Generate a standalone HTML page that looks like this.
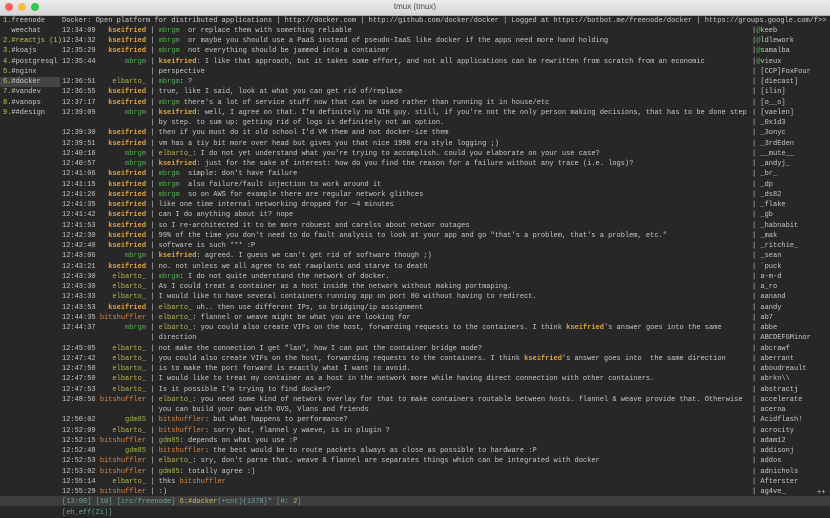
<!DOCTYPE html>
<html><head><meta charset="utf-8">
<style>
*{margin:0;padding:0}
body{width:830px;height:515px;overflow:hidden;background:#272727;position:relative;font-family:"Liberation Mono",monospace;}
.title{position:absolute;left:0;top:0;width:830px;height:15px;background:linear-gradient(#ececec,#d4d4d4);border-bottom:1px solid #b0b0b0;}
.title .t{position:absolute;left:0;width:830px;top:2px;text-align:center;font:8px "Liberation Sans",sans-serif;color:#4a4a4a}
.dot{position:absolute;top:3px;width:8px;height:8px;border-radius:50%}
pre{position:absolute;font-family:"Liberation Mono",monospace;font-size:7px;line-height:10.25px;color:#c8c8c8;white-space:pre;margin:0}
.k{color:#e3a443;font-weight:bold}
.m{color:#4fae4f}
.e{color:#b7b54c}
.b{color:#d98646}
.g{color:#a2b444}
.y{color:#c9c05a}
.c{color:#6aa6a0}
.s{position:absolute;left:0;top:496px;width:830px;height:10px;background:#3d3d3d}
.sel{position:absolute;left:0;top:77px;width:60px;height:10px;background:#444}
</style></head><body>
<div class="title"><div class="dot" style="left:5px;background:#fc605c"></div><div class="dot" style="left:18px;background:#fdbc40"></div><div class="dot" style="left:31px;background:#34c84a"></div><div class="t">tmux (tmux)</div></div>
<div class="sel"></div>
<div class="s"></div>
<pre style="left:3px;top:15.5px"><span class="y">1.</span>freenode
  weechat
<span class="y">2.#reactjs (1)</span>
<span class="y">3.</span>#koajs
<span class="y">4.</span>#postgresql
<span class="y">5.</span>#nginx
<span class="y">6.</span>#docker
<span class="y">7.</span>#vandev
<span class="y">8.</span>#vanops
<span class="y">9.</span>##design</pre>
<pre style="left:62px;top:15.5px">Docker: Open platform for distributed applications | http://docker.com | http://github.com/docker/docker | Logged at https://botbot.me/freenode/docker | https://groups.google.com/f&gt;&gt;
12:34:09   <span class="k">kseifried</span> | <span class="m">mbrgm</span>  or replace them with something reliable
12:34:32   <span class="k">kseifried</span> | <span class="m">mbrgm</span>  or maybe you should use a PaaS instead of pseudo-IaaS like docker if the apps need more hand holding
12:35:29   <span class="k">kseifried</span> | <span class="m">mbrgm</span>  not everything should be jammed into a container
12:35:44       <span class="m">mbrgm</span> | <span class="k">kseifried</span>: I like that approach, but it takes some effort, and not all applications can be rewritten from scratch from an economic
                     | perspective
12:36:51    <span class="e">elbarto_</span> | <span class="m">mbrgm</span>: ?
12:36:55   <span class="k">kseifried</span> | true, like I said, look at what you can get rid of/replace
12:37:17   <span class="k">kseifried</span> | <span class="m">mbrgm</span> there's a lot of service stuff now that can be used rather than running it in house/etc
12:39:09       <span class="m">mbrgm</span> | <span class="k">kseifried</span>: well, I agree on that. I'm definitely no NIH guy. still, if you're not the only person making decisions, that has to be done step
                     | by step. to sum up: getting rid of logs is definitely not an option.
12:39:30   <span class="k">kseifried</span> | then if you must do it old school I'd VM them and not docker-ize them
12:39:51   <span class="k">kseifried</span> | vm has a tiy bit more over head but gives you that nice 1998 era style logging ;)
12:40:16       <span class="m">mbrgm</span> | <span class="e">elbarto_</span>: I do not yet understand what you're trying to accomplish. could you elaborate on your use case?
12:40:57       <span class="m">mbrgm</span> | <span class="k">kseifried</span>: just for the sake of interest: how do you find the reason for a failure without any trace (i.e. logs)?
12:41:06   <span class="k">kseifried</span> | <span class="m">mbrgm</span>  simple: don't have failure
12:41:15   <span class="k">kseifried</span> | <span class="m">mbrgm</span>  also failure/fault injection to work around it
12:41:26   <span class="k">kseifried</span> | <span class="m">mbrgm</span>  so on AWS for example there are regular network glithces
12:41:35   <span class="k">kseifried</span> | like one time internal networking dropped for ~4 minutes
12:41:42   <span class="k">kseifried</span> | can I do anything about it? nope
12:41:53   <span class="k">kseifried</span> | so I re-architected it to be more robuest and carelss about networ outages
12:42:30   <span class="k">kseifried</span> | 99% of the time you don't need to do fault analysis to look at your app and go "that's a problem, that's a problem, etc."
12:42:40   <span class="k">kseifried</span> | software is such *** :P
12:43:06       <span class="m">mbrgm</span> | <span class="k">kseifried</span>: agreed. I guess we can't get rid of software though ;)
12:43:21   <span class="k">kseifried</span> | no. not unless we all agree to eat rawplants and starve to death
12:43:30    <span class="e">elbarto_</span> | <span class="m">mbrgm</span>: I do not quite understand the network of docker.
12:43:30    <span class="e">elbarto_</span> | As I could treat a container as a host inside the network without making portmaping.
12:43:33    <span class="e">elbarto_</span> | I would like to have several containers running app on port 80 without having to redirect.
12:43:53   <span class="k">kseifried</span> | <span class="e">elbarto_</span> uh.. then use different IPs, so bridging/ip assignment
12:44:35 <span class="b">bitshuffler</span> | <span class="e">elbarto_</span>: flannel or weave might be what you are looking for
12:44:37       <span class="m">mbrgm</span> | <span class="e">elbarto_</span>: you could also create VIFs on the host, forwarding requests to the containers. I think <span class="k">kseifried</span>'s answer goes into the same
                     | direction
12:45:05    <span class="e">elbarto_</span> | not make the connection I get "lan", how I can put the container bridge mode?
12:47:42    <span class="e">elbarto_</span> | you could also create VIFs on the host, forwarding requests to the containers. I think <span class="k">kseifried</span>'s answer goes into  the same direction
12:47:50    <span class="e">elbarto_</span> | is to make the port forward is exactly what I want to avoid.
12:47:50    <span class="e">elbarto_</span> | I would like to treat my container as a host in the network more while having direct connection with other containers.
12:47:53    <span class="e">elbarto_</span> | Is it possible I'm trying to find docker?
12:48:56 <span class="b">bitshuffler</span> | <span class="e">elbarto_</span>: you need some kind of network overlay for that to make containers routable between hosts. flannel &amp; weave provide that. Otherwise
                     | you can build your own with OVS, Vlans and friends
12:50:02       <span class="g">gdm85</span> | <span class="b">bitshuffler</span>: but what happens to performance?
12:52:09    <span class="e">elbarto_</span> | <span class="b">bitshuffler</span>: sorry but, flannel y waeve, is in plugin ?
12:52:15 <span class="b">bitshuffler</span> | <span class="g">gdm85</span>: depends on what you use :P
12:52:48       <span class="g">gdm85</span> | <span class="b">bitshuffler</span>: the best would be to route packets always as close as possible to hardware :P
12:52:53 <span class="b">bitshuffler</span> | <span class="e">elbarto_</span>: sry, don't parse that. weave &amp; flannel are separates things which can be integrated with docker
12:53:02 <span class="b">bitshuffler</span> | <span class="g">gdm85</span>: totally agree :)
12:55:14    <span class="e">elbarto_</span> | thks <span class="b">bitshuffler</span>
12:55:29 <span class="b">bitshuffler</span> | :)
<span class="c">[13:00] [10] [irc/freenode]</span> <span class="y">6:#docker</span><span class="c">(+cnt){1378}* [H: </span><span class="y">2</span><span class="c">]</span>
<span class="c">[eh_eff(Zi)]</span></pre>
<pre style="left:752px;top:25.75px">|<span class="m">@</span>keeb
|<span class="m">@</span>ldlework
|<span class="m">@</span>samalba
|<span class="m">@</span>vieux
| [CCP]FoxFour
| [diecast]
| [ilin]
| [o__o]
| [vaelen]
| _0x1d3
| _3onyc
| _3rdEden
| __mute__
| _andyj_
| _br_
| _dp
| _ds82
| _flake
| _gb
| _habnabit
| _mak
| _ritchie_
| _sean
| `puck
| a-m-d
| a_ro
| aanand
| aandy
| ab7
| abbe
| ABCDEFGMinor
| abcrawf
| aberrant
| aboudreault
| abrkn\\
| abstractj
| accelerate
| acerna
| Acidflash!
| acrocity
| adam12
| addisonj
| addos
| adnichols
| Afterster
| ag4ve_</pre>
<pre style="left:817px;top:487.5px">++</pre>
</body></html>
